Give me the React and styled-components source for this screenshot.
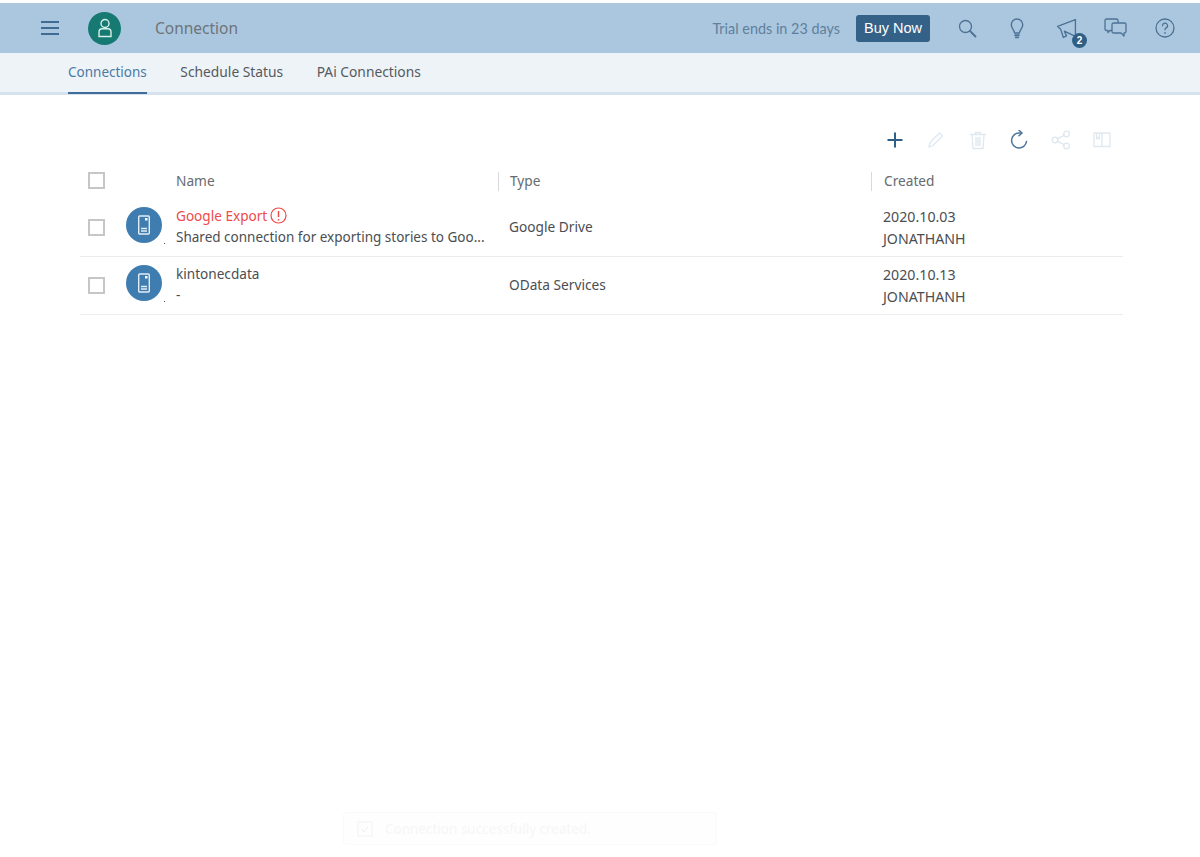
import React from "react";
import styled, { createGlobalStyle } from "styled-components";

const GlobalStyle = createGlobalStyle`
  html, body {
    margin: 0;
    padding: 0;
    background: #fff;
    font-family: "Noto Sans", "Open Sans", sans-serif;
  }
`;

const Page = styled.div`
  position: relative;
  width: 1200px;
  height: 857px;
  padding-top: 3px;
  box-sizing: border-box;
  overflow: hidden;
`;

const Shell = styled.header`
  display: flex;
  align-items: center;
  height: 50px;
  background: #abc7df;
  padding: 0 23px 0 40px;
`;
const IconButton = styled.button`
  display: flex;
  align-items: center;
  justify-content: center;
  position: relative;
  width: ${p => p.$w || 20}px;
  height: 24px;
  padding: 0;
  border: 0;
  background: none;
  color: ${p => p.$color || "#4d7295"};
`;
const Avatar = styled.div`
  display: flex;
  align-items: center;
  justify-content: center;
  width: 33px;
  height: 33px;
  margin-left: 28px;
  border-radius: 50%;
  background: #167a72;
`;
const ShellTitle = styled.div`
  margin-left: 34px;
  font-size: 15.5px;
  color: #6e7478;
`;
const Spacer = styled.div`
  flex-grow: 1;
`;
const Trial = styled.span`
  font-family: Lato, sans-serif;
  font-size: 14.4px;
  color: #5f7f9c;
`;
const BuyNow = styled.button`
  height: 27px;
  width: 74px;
  margin-left: 16px;
  padding: 0;
  border: 0;
  border-radius: 3px;
  background: #346187;
  color: #fff;
  font-family: "Liberation Sans", sans-serif;
  font-size: 14.5px;
`;
const ShellIcons = styled.div`
  display: flex;
  align-items: center;
  gap: 25.5px;
  margin-left: 25px;
`;
const Badge = styled.span`
  position: absolute;
  top: 17px;
  left: 18px;
  width: 15px;
  height: 15px;
  border-radius: 50%;
  background: #2f5f85;
  color: #fff;
  font-family: "Liberation Sans", sans-serif;
  font-size: 10px;
  font-weight: 700;
  line-height: 15px;
  text-align: center;
`;

const Tabs = styled.nav`
  display: flex;
  gap: 33.5px;
  height: 39px;
  padding-left: 68px;
  background: #eef3f8;
  border-bottom: 3px solid #d6e3ef;
`;
const Tab = styled.div`
  position: relative;
  padding-top: 9px;
  line-height: 20px;
  font-size: ${p => (p.$active ? 13.5 : 13.8)}px;
  color: ${p => (p.$active ? "#4c7aa5" : "#555a5e")};
  ${p => p.$active && `
    &::after {
      content: "";
      position: absolute;
      left: 0;
      right: 0;
      bottom: -2px;
      height: 2px;
      background: #3d6d98;
    }
  `}
`;

const Content = styled.main`
  padding: 33px 77px 0 80px;
`;
const Toolbar = styled.div`
  display: flex;
  justify-content: flex-end;
  gap: 21.5px;
  height: 26px;
  padding-right: 11px;
`;
const ToolIcon = styled(IconButton)`
  color: ${p => (p.$enabled ? "#4a759c" : "#dfe7ef")};
`;

const cols = "96px 322px 373px 1fr";
const HeadRow = styled.div`
  display: grid;
  grid-template-columns: ${cols};
  height: 36px;
  margin-top: 9px;
  align-items: center;
`;
const HeadCell = styled.div`
  height: 19px;
  line-height: 18px;
  padding-left: ${p => p.$pad || 0}px;
  border-left: ${p => (p.$divider ? "1px solid #d9d9d9" : "0")};
  font-size: 13.7px;
  color: #666b6f;
`;
const Check = styled.span`
  display: block;
  flex: none;
  width: 13px;
  height: 13px;
  margin-left: 8px;
  border: 2px solid #c6c6c6;
  background: #fff;
`;
const Row = styled.div`
  display: grid;
  grid-template-columns: ${cols};
  height: 57px;
  align-items: center;
  border-bottom: 1px solid #ececec;
`;
const Lead = styled.div`
  display: flex;
  align-items: center;
  gap: 21px;
`;
const ObjectIcon = styled.div`
  position: relative;
  display: flex;
  flex: none;
  align-items: center;
  justify-content: center;
  width: 36px;
  height: 36px;
  margin-bottom: 6px;
  border-radius: 50%;
  background: #3f7db0;
  &::after {
    content: "";
    position: absolute;
    right: -3px;
    bottom: -1px;
    width: 1px;
    height: 1px;
    background: #555;
  }
`;
const NameCell = styled.div`
  display: flex;
  flex-direction: column;
  gap: 4px;
  margin-bottom: 3px;
  min-width: 0;
`;
const NameLine = styled.div`
  display: flex;
  align-items: center;
  gap: 3px;
  height: 18px;
  font-size: 13.6px;
  color: ${p => (p.$error ? "#ee4a4a" : "#4a4e52")};
`;
const Description = styled.div`
  height: 18px;
  line-height: 18px;
  font-size: 13.5px;
  color: #4a4e52;
  white-space: nowrap;
`;
const TypeCell = styled.div`
  padding: 0 0 2px 11px;
  font-size: 13.7px;
  color: #4a4e52;
`;
const CreatedCell = styled.div`
  display: flex;
  flex-direction: column;
  gap: 4px;
  padding-left: 12px;
  font-size: 14.2px;
  line-height: 18px;
  color: #4a4e52;
`;

const Toast = styled.div`
  position: absolute;
  left: 343px;
  top: 812px;
  display: flex;
  align-items: center;
  gap: 12px;
  width: 374px;
  height: 33px;
  padding-left: 13px;
  box-sizing: border-box;
  border: 1px solid #fafafa;
  border-radius: 4px;
  background: #fefefe;
  color: #f6f6f6;
  font-size: 13.5px;
`;

const Svg = ({ size = 20, sw = 1.3, children }) => (
  <svg width={size} height={size} viewBox="0 0 20 20" fill="none" stroke="currentColor" strokeWidth={sw} strokeLinecap="round" strokeLinejoin="round">
    {children}
  </svg>
);

const DeviceIcon = () => (
  <svg width="14" height="20" viewBox="0 0 14 20" fill="none" stroke="#e3edf5" strokeWidth="1.4">
    <rect x="1.7" y="1" width="10.600" height="18" rx="1" />
    <path d="M4 13.500h6M4 16h6" />
    <rect x="8" y="3" width="2.500" height="2.500" fill="#fff" stroke="none" />
  </svg>
);

const rows = [
  { name: "Google Export", error: true, desc: "Shared connection for exporting stories to Goo...", type: "Google Drive", date: "2020.10.03" },
  { name: "kintonecdata", desc: "-", type: "OData Services", date: "2020.10.13" },
];

const App = () => {
  return (
    <Page>
      <GlobalStyle />
      <Shell>
        <IconButton $w={20} $color="#3f6c94">
          <svg width="20" height="16" viewBox="0 0 20 16" stroke="currentColor" strokeWidth="2.2">
            <path d="M1 2h18M1 8h18M1 14h18" />
          </svg>
        </IconButton>
        <Avatar>
          <svg width="18" height="20" viewBox="0 0 18 20" fill="none" stroke="#d7efe9" strokeWidth="1.4">
            <circle cx="9" cy="5.500" r="4" />
            <path d="M3 18.500v-4.500c0-2 1.500-3.200 3.200-3.200h5.600c1.700 0 3.200 1.200 3.200 3.200v4.500z" />
          </svg>
        </Avatar>
        <ShellTitle>Connection</ShellTitle>
        <Spacer />
        <Trial>Trial ends in 23 days</Trial>
        <BuyNow>Buy Now</BuyNow>
        <ShellIcons>
          <IconButton $w={24}>
            <Svg>
              <circle cx="8.500" cy="8.500" r="6" />
              <path d="M13 13l5.500 5.500" strokeWidth="1.800" />
            </Svg>
          </IconButton>
          <IconButton $w={24}>
            <Svg size={22}>
              <path d="M7.800 14.500c0-2.500-3-3.800-3-7.500a5.200 5.200 0 0 1 10.400 0c0 3.700-3 5-3 7.500z" />
              <path d="M8.300 16.500h3.400M8.800 18.500h2.400" strokeWidth="1.600" />
            </Svg>
          </IconButton>
          <IconButton $w={24}>
            <Svg size={21}>
              <path d="M1.500 8l17-6.500v16L8 12.500 10 17l-3 1.500L4.500 10.800z" />
            </Svg>
            <Badge>2</Badge>
          </IconButton>
          <IconButton $w={24}>
            <svg width="24" height="20" viewBox="0 0 24 20" fill="none" stroke="currentColor" strokeWidth="1.3" strokeLinejoin="round">
              <path d="M8 12.500H6l-2 2v-2H2.500a1.500 1.500 0 0 1-1.500-1.500V2.500A1.500 1.500 0 0 1 2.500 1h10A1.500 1.500 0 0 1 14 2.500V5" />
              <path d="M9.500 5h11A1.500 1.500 0 0 1 22 6.500v7a1.500 1.500 0 0 1-1.500 1.500H20v3l-3-3H9.500A1.500 1.500 0 0 1 8 13.500v-7A1.500 1.500 0 0 1 9.500 5z" />
            </svg>
          </IconButton>
          <IconButton $w={24}>
            <Svg size={20}>
              <circle cx="10" cy="10" r="9" />
              <path d="M7.500 7.700a2.500 2.500 0 1 1 3.700 2.200c-.8.500-1.200 1-1.200 1.900" />
              <path d="M10 14.800v.2" strokeWidth="1.700" />
            </Svg>
          </IconButton>
        </ShellIcons>
      </Shell>
      <Tabs>
        <Tab $active>Connections</Tab>
        <Tab>Schedule Status</Tab>
        <Tab>PAi Connections</Tab>
      </Tabs>
      <Content>
        <Toolbar>
          <ToolIcon $enabled>
            <svg width="16" height="16" viewBox="0 0 16 16" stroke="#2f5f88" strokeWidth="2">
              <path d="M8 0.500v15M0.500 8h15" />
            </svg>
          </ToolIcon>
          <ToolIcon>
            <Svg>
              <path d="M3 17l1-4.500L13.500 3l3 3L7 15.500z" />
            </Svg>
          </ToolIcon>
          <ToolIcon>
            <Svg>
              <path d="M2.500 4.500h15M7.500 4.500V2.500h5v2M4 4.500l1 14h10l1-14M8 7.500v8M10 7.500v8M12 7.500v8" />
            </Svg>
          </ToolIcon>
          <ToolIcon $enabled>
            <Svg sw={1.500}>
              <path d="M17.500 11.500a7.500 7.500 0 1 1-7.500-8.500h2.500" />
              <path d="M10 0.300l3 2.700-3 2.700" />
            </Svg>
          </ToolIcon>
          <ToolIcon>
            <Svg>
              <circle cx="4" cy="10" r="2.800" />
              <circle cx="15.500" cy="4" r="2.800" />
              <circle cx="15.500" cy="16" r="2.800" />
              <path d="M6.500 8.700l6.500-3.400M6.500 11.300l6.500 3.400" />
            </Svg>
          </ToolIcon>
          <ToolIcon>
            <Svg>
              <path d="M2 3h16v13.500H2zM10 3v13.500M4.500 3v6l1.500-1.500L7.500 9V3" />
            </Svg>
          </ToolIcon>
        </Toolbar>
        <HeadRow>
          <HeadCell><Check /></HeadCell>
          <HeadCell>Name</HeadCell>
          <HeadCell $divider $pad={11}>Type</HeadCell>
          <HeadCell $divider $pad={12}>Created</HeadCell>
        </HeadRow>
        {rows.map(row => (
          <Row key={row.name}>
            <Lead>
              <Check />
              <ObjectIcon><DeviceIcon /></ObjectIcon>
            </Lead>
            <NameCell>
              <NameLine $error={row.error}>
                {row.name}
                {row.error && (
                  <svg width="17" height="17" viewBox="0 0 17 17" fill="none" stroke="#ee4a4a" strokeWidth="1.200">
                    <circle cx="8.500" cy="8.500" r="7.500" />
                    <path d="M8.500 4v6M8.500 12v1.500" strokeWidth="1.500" />
                  </svg>
                )}
              </NameLine>
              <Description>{row.desc}</Description>
            </NameCell>
            <TypeCell>{row.type}</TypeCell>
            <CreatedCell>
              <span>{row.date}</span>
              <span>JONATHANH</span>
            </CreatedCell>
          </Row>
        ))}
      </Content>
      <Toast>
        <svg width="16" height="16" viewBox="0 0 16 16" fill="none" stroke="#f3f3f3" strokeWidth="1.200">
          <rect x="1" y="1" width="14" height="14" />
          <path d="M4.500 8l2.500 3 4.500-6" />
        </svg>
        Connection successfully created.
      </Toast>
    </Page>
  );
};

export default App;
